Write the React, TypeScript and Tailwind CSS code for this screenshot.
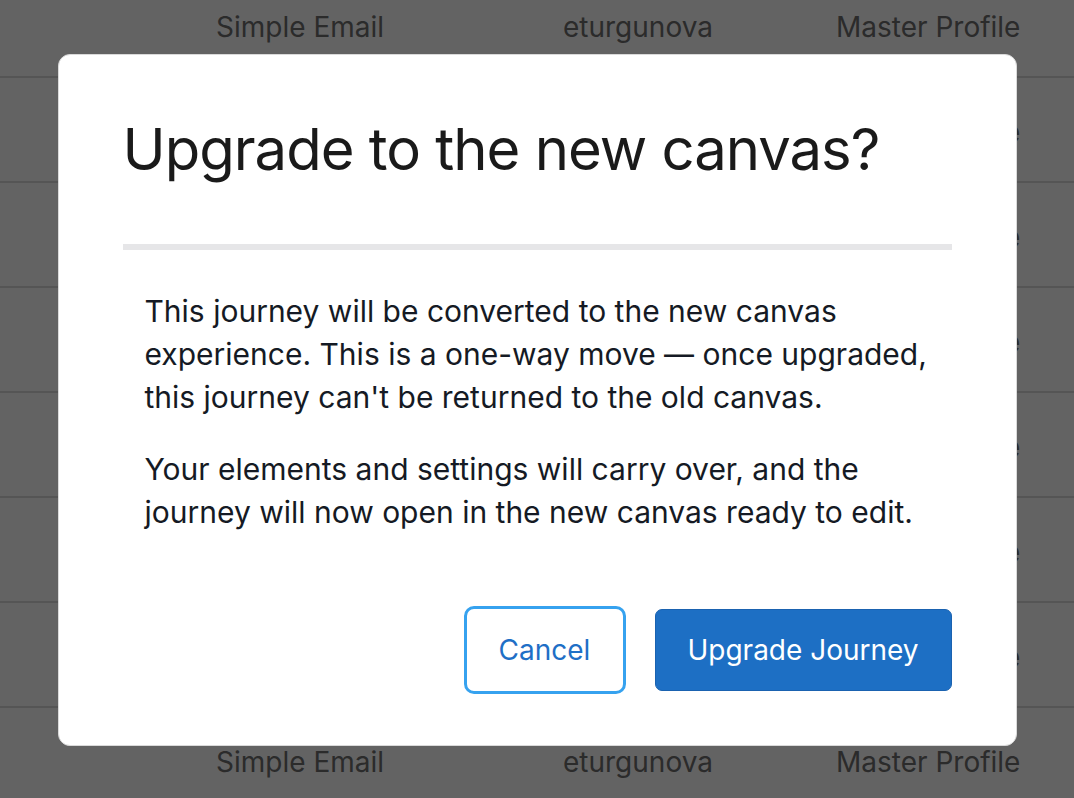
import React from 'react';

const rows = Array.from({ length: 8 });

const BackgroundTable = () => (
  <div className="-mt-[27px] bg-white">
    {rows.map((_, i) => (
      <div
        key={i}
        className="flex h-[105px] items-center border-b-2 border-[#dbdbdb] pt-[5px] text-[28px] text-[#6f6f6f]"
      >
        <span className="ml-[216px] w-[347px]">Simple Email</span>
        <span className="w-[273px]">eturgunova</span>
        <span>Master Profile</span>
      </div>
    ))}
  </div>
);

export default function App() {
  return (
    <div
      className="relative h-[798px] w-full overflow-hidden bg-white"
      style={{ fontFamily: 'Inter, "Noto Sans", sans-serif' }}
    >
      <BackgroundTable />

      {/* Overlay + dialog */}
      <div className="absolute inset-0 flex items-start justify-center bg-[rgba(0,0,0,0.612)] pt-[54px]">
        <div className="w-[959px] rounded-[12px] border border-[#dadada] bg-white px-[64px] pt-[60px] pb-[51px]">
          <h2 className="text-[58px] leading-[68px] font-normal tracking-[-1px] text-[#1a1a1a]">
            Upgrade to the new canvas?
          </h2>
          <div className="mt-[61px] h-[6px] bg-[#e6e6e8]" />
          <div className="mt-[40px] pl-[22px] text-[30px] leading-[43px] text-[#151a24]">
            <p className="mb-[29px]">
              This journey will be converted to the new canvas experience. This is a one-way move —
              once upgraded, this journey can't be returned to the old canvas.
            </p>
            <p>
              Your elements and settings will carry over, and the journey will now open in the new
              canvas ready to edit.
            </p>
          </div>
          <div className="mt-[72px] flex items-center justify-end gap-[29px]">
            <button className="h-[88px] w-[162px] rounded-[10px] border-[3px] border-[#36a2ef] bg-white text-[28px] text-[#1f6fc6]">
              Cancel
            </button>
            <button className="h-[82px] w-[297px] rounded-[7px] border border-[#1a62b0] bg-[#1d6fc4] text-[28px] text-white">
              Upgrade Journey
            </button>
          </div>
        </div>
      </div>
    </div>
  );
}
